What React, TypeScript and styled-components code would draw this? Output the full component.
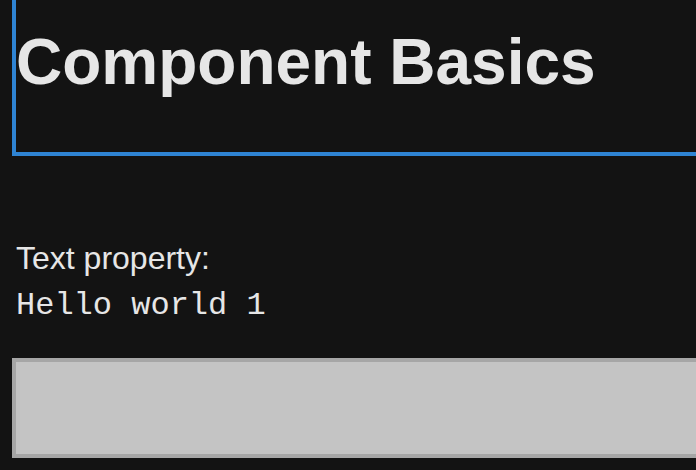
import React from "react";
import styled, { createGlobalStyle } from "styled-components";

const Global = createGlobalStyle`
  html, body {
    margin: 0;
    padding: 0;
    background: #131313;
    overflow: hidden;
  }
  body {
    font-family: "Liberation Sans", Arial, sans-serif;
    color: #e6e6e6;
  }
`;

const Page = styled.div`
  width: 100%;
  height: 470px;
  padding-left: 12px;
  display: flex;
  flex-direction: column;
  box-sizing: border-box;
`;

const HeaderBox = styled.section`
  border: 4px solid #2f84d3;
  border-top: 0;
  border-right: 0;
  padding: 25px 0 53px 0;
`;

const Title = styled.h1`
  margin: 0;
  font-size: 64px;
  line-height: 74px;
  font-weight: 700;
  color: #e6e6e6;
  white-space: nowrap;
`;

const Field = styled.div`
  margin-top: 84px;
  padding-left: 4px;
  display: flex;
  flex-direction: column;
  gap: 10px;
`;

const Label = styled.div`
  font-size: 32px;
  line-height: 37px;
`;

const Value = styled.div`
  font-family: "Liberation Mono", "Courier New", monospace;
  font-size: 32px;
  line-height: 37px;
`;

const Box = styled.div`
  margin-top: 34px;
  height: 100px;
  box-sizing: border-box;
  background: #c4c4c4;
  border: 4px solid #a6a6a6;
  border-right: 0;
`;

export default function App() {
  return (
    <>
      <Global />
      <Page>
        <HeaderBox>
          <Title>Component Basics</Title>
        </HeaderBox>
        <Field>
          <Label>Text property:</Label>
          <Value>Hello world 1</Value>
        </Field>
        <Box />
      </Page>
    </>
  );
}
